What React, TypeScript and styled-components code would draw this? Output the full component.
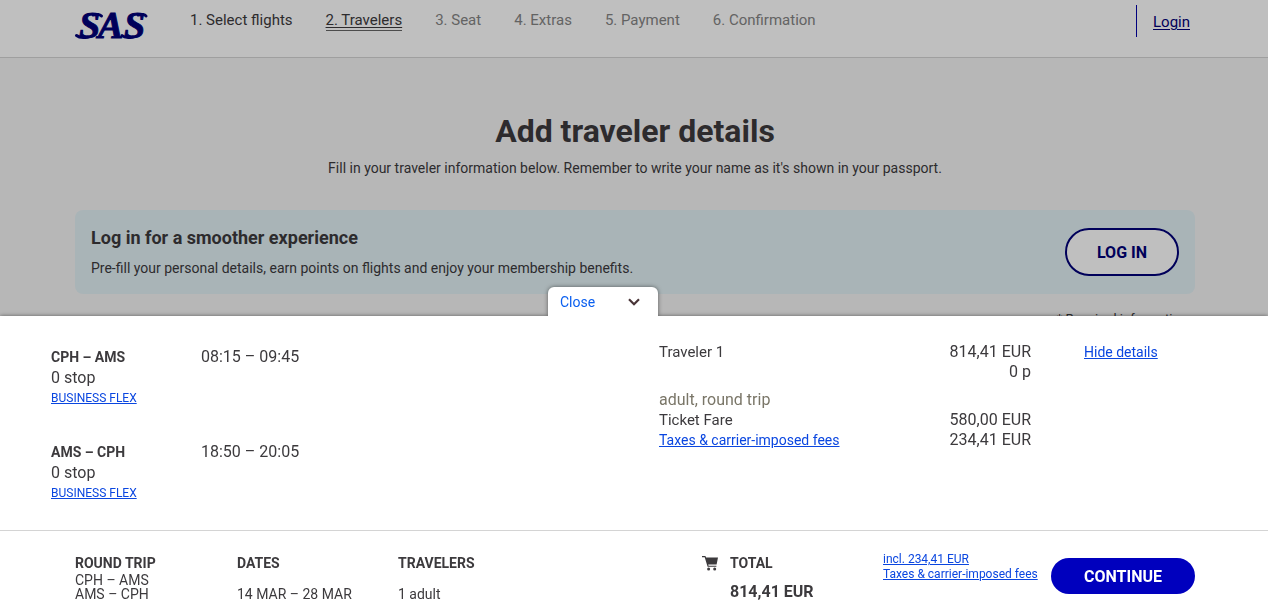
import React from 'react';
import styled, { createGlobalStyle } from 'styled-components';

const GlobalStyle = createGlobalStyle`
  *, *::before, *::after { box-sizing: border-box; }
  body {
    margin: 0;
    background: #f5f5f5;
    color: #3c3a3d;
    font-family: Roboto, "Noto Sans", sans-serif;
    font-size: 15px;
    line-height: 20px;
  }
  h1, h2, h3, p, ol, dl, dd, dt { margin: 0; padding: 0; }
  button { font-family: inherit; cursor: pointer; }
`;

const Page = styled.div`
  min-height: 100vh;
  overflow: hidden;
`;

const Header = styled.header`
  display: flex;
  align-items: flex-start;
  height: 58px;
  padding: 0 73px 0 75px;
  background: #fff;
  border-bottom: 1px solid #d4d4d4;
`;

const LogoLink = styled.a`
  display: block;
  width: 74px;
  height: 30px;
  margin-top: 11px;
  svg { display: block; overflow: visible; }
`;

const Steps = styled.ol`
  display: flex;
  gap: 33px;
  margin: 10px 0 0 41px;
  list-style: none;
`;

const Step = styled.li<{ $state: 'done' | 'current' | 'todo' }>`
  height: 21px;
  line-height: 20px;
  color: ${(p) => (p.$state === 'todo' ? '#858585' : '#3c3a3d')};
  border-bottom: 1px solid ${(p) => (p.$state === 'current' ? '#666' : 'transparent')};
  text-decoration: ${(p) => (p.$state === 'current' ? 'underline' : 'none')};
  text-underline-offset: 2px;
`;

const Account = styled.div`
  display: flex;
  align-items: center;
  height: 32px;
  margin: 5px 0 0 auto;
  padding: 2px 5px 0 16px;
  border-left: 1px solid #0000a8;
`;

const LoginLink = styled.a`
  color: #000078;
  text-underline-offset: 2px;
`;

const Main = styled.main`
  padding: 53px 73px 0 75px;
`;

const Title = styled.h1`
  font-size: 32px;
  line-height: 40px;
  font-weight: 700;
  text-align: center;
`;

const Intro = styled.p`
  margin-top: 7px;
  font-size: 14px;
  text-align: center;
`;

const Banner = styled.section`
  display: flex;
  align-items: center;
  justify-content: space-between;
  margin-top: 32px;
  padding: 16px;
  border-radius: 8px;
  background: #e2f0f5;
`;

const BannerTitle = styled.h2`
  font-size: 18px;
  line-height: 24px;
  font-weight: 700;
`;

const BannerText = styled.p`
  margin-top: 8px;
  font-size: 14px;
`;

const OutlineButton = styled.button`
  height: 48px;
  padding: 0 30px;
  border: 2px solid #000078;
  border-radius: 24px;
  background: #fff;
  color: #000078;
  font-size: 16px;
  font-weight: 700;
`;

const Required = styled.p`
  margin-top: 15px;
  padding-right: 8px;
  text-align: right;
  font-size: 13px;
`;

const Overlay = styled.div`
  position: fixed;
  inset: 0;
  background: rgba(0, 0, 0, 0.25);
`;

const Drawer = styled.aside`
  position: fixed;
  left: 0;
  right: 0;
  bottom: 0;
  background: #fff;
  box-shadow: 0 0 4px rgba(0, 0, 0, 0.5);
`;

const Tab = styled.button`
  position: absolute;
  bottom: 100%;
  left: 548px;
  display: flex;
  align-items: center;
  justify-content: space-between;
  width: 110px;
  height: 29px;
  padding: 0 18px 0 12px;
  border: 0;
  border-radius: 6px 6px 0 0;
  background: #fff;
  color: #0a5ff0;
  font-size: 14px;
  box-shadow: 0 0 4px rgba(0, 0, 0, 0.5);
  clip-path: inset(-6px -6px 0 -6px);
`;

const Details = styled.div`
  display: grid;
  grid-template-columns: 608px 372px 1fr;
  padding: 26px 51px 27px 51px;
`;

const Flights = styled.div`
  display: grid;
  gap: 34px;
  padding-top: 5px;
`;

const Flight = styled.div`
  display: grid;
  grid-template-columns: 150px 1fr;
  align-items: start;
`;

const Route = styled.h3`
  font-size: 14px;
  line-height: 20px;
  font-weight: 700;
`;

const Stops = styled.p`
  font-size: 16px;
  line-height: 21px;
`;

const Times = styled.p`
  font-size: 16px;
  line-height: 20px;
`;

const TextLink = styled.a<{ $size?: number; $block?: boolean }>`
  display: ${(p) => (p.$block ? 'block' : 'inline')};
  color: #0a46e0;
  font-size: ${(p) => p.$size ?? 14}px;
  white-space: nowrap;
`;

const Fares = styled.dl`
  display: grid;
  grid-template-columns: 1fr auto;
  align-content: start;
`;

const Amount = styled.dd`
  text-align: right;
  font-size: 16px;
`;

const Passenger = styled.dt`
  grid-column: 1 / -1;
  margin-top: 8px;
  color: #7a7668;
  font-size: 16px;
`;

const HideCell = styled.div`
  padding-left: 53px;
`;

const Summary = styled.footer`
  display: grid;
  grid-template-columns: 162px 161px 1fr 181px 168px 144px;
  align-items: start;
  height: 79px;
  padding: 22px 73px 0 75px;
  border-top: 1px solid #d4d4d4;
`;

const Label = styled.h3`
  font-size: 14px;
  line-height: 20px;
  font-weight: 700;
`;

const Routes = styled.p`
  font-size: 14px;
  line-height: 14px;
`;

const Value = styled.p`
  margin-top: 11px;
  font-size: 14px;
`;

const Total = styled.div`
  display: grid;
  grid-template-columns: 28px 1fr;
  svg { margin-top: 3px; }
`;

const TotalValue = styled.p`
  grid-column: 2;
  margin-top: 9px;
  font-size: 16px;
  font-weight: 700;
`;

const TaxLinks = styled.div`
  display: grid;
  justify-items: start;
  margin-top: -1px;
  line-height: 15px;
`;

const ContinueButton = styled.button`
  height: 36px;
  margin-top: 5px;
  border: 0;
  border-radius: 18px;
  background: #0000be;
  color: #fff;
  font-size: 16px;
  font-weight: 700;
`;

const steps: { label: string; state: 'done' | 'current' | 'todo' }[] = [
  { label: '1. Select flights', state: 'done' },
  { label: '2. Travelers', state: 'current' },
  { label: '3. Seat', state: 'todo' },
  { label: '4. Extras', state: 'todo' },
  { label: '5. Payment', state: 'todo' },
  { label: '6. Confirmation', state: 'todo' },
];

const flights = [
  { route: 'CPH – AMS', times: '08:15 – 09:45' },
  { route: 'AMS – CPH', times: '18:50 – 20:05' },
];

function Logo() {
  return (
    <svg width="74" height="30" viewBox="0 0 74 30" aria-hidden="true">
      <text
        x="4 23 49"
        y="27"
        fill="#000078"
        stroke="#000078"
        strokeWidth="1"
        fontFamily="Liberation Serif, serif"
        fontSize="38"
        fontStyle="italic"
        fontWeight="700"
      >
        SAS
      </text>
      <g fill="none" stroke="#000078" strokeWidth="3" strokeLinecap="round">
        <path d="M1.500 24.500C4 26.500 8 27 13 26" />
        <path d="M47 24.500C49 26.500 53 27 58 26" />
        <path d="M18 4C21 3 25 3.500 26.500 5" />
        <path d="M63 4C66 3 70 3.500 71 5" />
      </g>
    </svg>
  );
}

function Chevron() {
  return (
    <svg width="12" height="8" viewBox="0 0 12 8" aria-hidden="true">
      <path d="M1 1.200 6 6.200 11 1.200" fill="none" stroke="#4a3538" strokeWidth="2.200" />
    </svg>
  );
}

function Cart() {
  return (
    <svg width="17" height="15" viewBox="0 0 17 15" aria-hidden="true">
      <path d="M0 0h3.4l.7 1.6H16L14.600 8.500H6.200l.4 1.200h7.800v1.100H5.600L2.700 1.200H0z" fill="#3c3a3d" />
      <circle cx="6.600" cy="13" r="1.500" fill="#3c3a3d" />
      <circle cx="12.700" cy="13" r="1.500" fill="#3c3a3d" />
    </svg>
  );
}

export default function App() {
  return (
    <>
      <GlobalStyle />
      <Page>
        <Header>
          <LogoLink href="#home" aria-label="SAS home">
            <Logo />
          </LogoLink>
          <Steps>
            {steps.map((s) => (
              <Step key={s.label} $state={s.state}>
                {s.label}
              </Step>
            ))}
          </Steps>
          <Account>
            <LoginLink href="#login">Login</LoginLink>
          </Account>
        </Header>
        <Main>
          <Title>Add traveler details</Title>
          <Intro>
            Fill in your traveler information below. Remember to write your name as it's shown in your passport.
          </Intro>
          <Banner>
            <div>
              <BannerTitle>Log in for a smoother experience</BannerTitle>
              <BannerText>
                Pre-fill your personal details, earn points on flights and enjoy your membership benefits.
              </BannerText>
            </div>
            <OutlineButton type="button">LOG IN</OutlineButton>
          </Banner>
          <Required>* Required information</Required>
        </Main>
      </Page>
      <Overlay />
      <Drawer>
        <Tab type="button">
          Close
          <Chevron />
        </Tab>
        <Details>
          <Flights>
            {flights.map((f) => (
              <Flight key={f.route}>
                <div>
                  <Route>{f.route}</Route>
                  <Stops>0 stop</Stops>
                  <TextLink href="#fare" $size={12} $block>BUSINESS FLEX</TextLink>
                </div>
                <Times>{f.times}</Times>
              </Flight>
            ))}
          </Flights>
          <Fares>
            <dt>Traveler 1</dt>
            <Amount>
              814,41 EUR
              <br />0 p
            </Amount>
            <Passenger>adult, round trip</Passenger>
            <dt>Ticket Fare</dt>
            <Amount>580,00 EUR</Amount>
            <dt>
              <TextLink href="#taxes">Taxes &amp; carrier-imposed fees</TextLink>
            </dt>
            <Amount>234,41 EUR</Amount>
          </Fares>
          <HideCell>
            <TextLink href="#hide">Hide details</TextLink>
          </HideCell>
        </Details>
        <Summary>
          <div>
            <Label>ROUND TRIP</Label>
            <Routes>
              CPH – AMS
              <br />
              AMS – CPH
            </Routes>
          </div>
          <div>
            <Label>DATES</Label>
            <Value>14 MAR – 28 MAR</Value>
          </div>
          <div>
            <Label>TRAVELERS</Label>
            <Value>1 adult</Value>
          </div>
          <Total>
            <Cart />
            <Label>TOTAL</Label>
            <TotalValue>814,41 EUR</TotalValue>
          </Total>
          <TaxLinks>
            <TextLink href="#taxes" $size={12}>incl. 234,41 EUR</TextLink>
            <TextLink href="#taxes" $size={12}>Taxes &amp; carrier-imposed fees</TextLink>
          </TaxLinks>
          <ContinueButton type="button">CONTINUE</ContinueButton>
        </Summary>
      </Drawer>
    </>
  );
}
